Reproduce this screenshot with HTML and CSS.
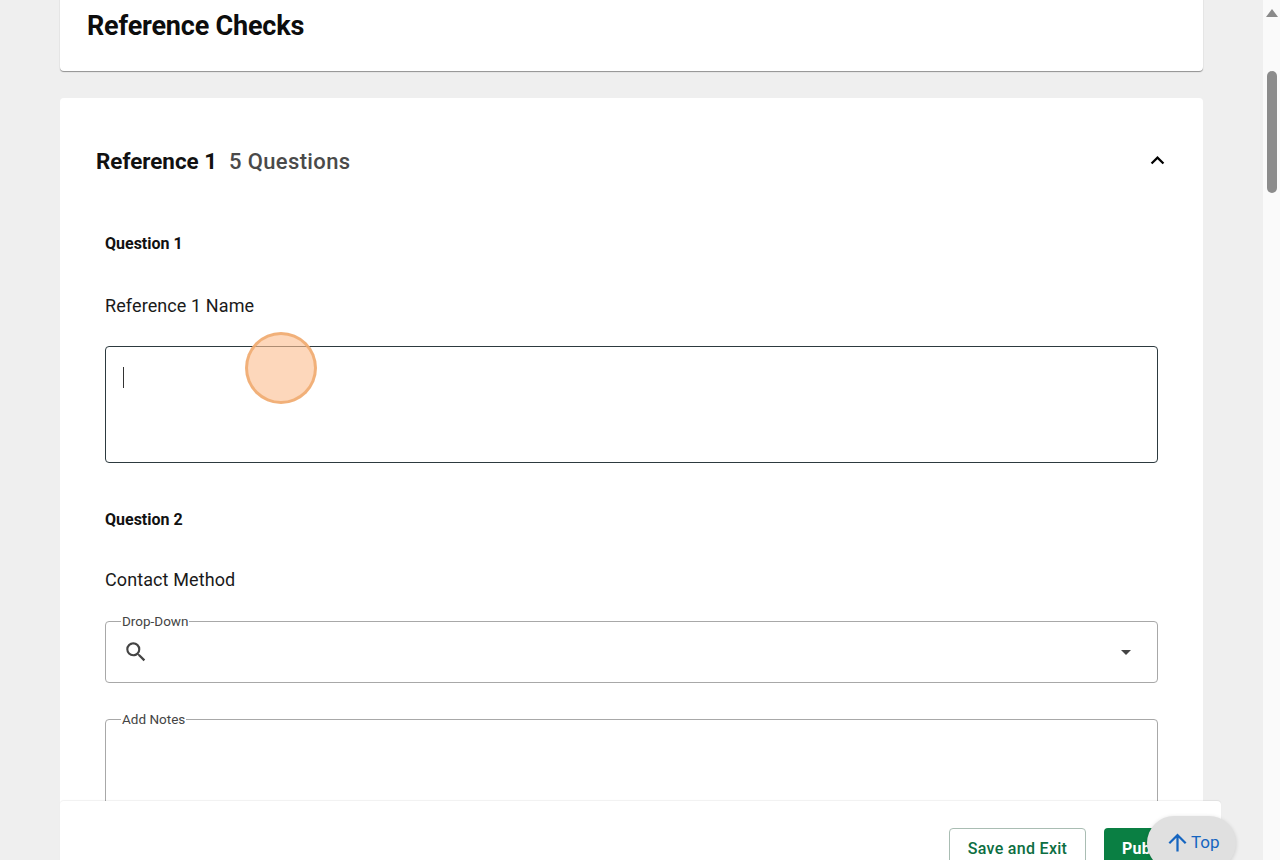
FILE: index.html
```html
<!DOCTYPE html>
<html lang="en">
<head>
<meta charset="utf-8">
<title>Reference Checks</title>
<link rel="stylesheet" href="styles.css">
</head>
<body>
<div class="viewport">
  <main class="content">
    <section class="card title-card"><h1>Reference Checks</h1></section>
    <section class="card ref-card">
      <header class="ref-head">
        <h2>Reference 1</h2>
        <span class="count">5 Questions</span>
        <svg class="chev" viewBox="0 0 24 24" width="27" height="27"><path d="M12 8l-6 6 1.41 1.41L12 10.83l4.59 4.58L18 14z"/></svg>
      </header>
      <div class="question">
        <h3>Question 1</h3>
        <p class="prompt">Reference 1 Name</p>
        <div class="textarea focused"><span class="caret"></span></div>
      </div>
      <div class="question q2">
        <h3>Question 2</h3>
        <p class="prompt">Contact Method</p>
        <fieldset class="field select">
          <legend>Drop-Down</legend>
          <svg class="search" viewBox="0 0 24 24" width="26" height="26"><path d="M15.5 14h-.79l-.28-.27A6.47 6.47 0 0 0 16 9.5 6.5 6.5 0 1 0 9.5 16c1.61 0 3.09-.59 4.23-1.57l.27.28v.79l5 4.99L20.49 19l-4.99-5zm-6 0C7.01 14 5 11.99 5 9.5S7.01 5 9.5 5 14 7.01 14 9.5 11.99 14 9.5 14z"/></svg>
          <svg class="arrow" viewBox="0 0 24 24" width="24" height="24"><path d="M7 10l5 5 5-5z"/></svg>
        </fieldset>
        <fieldset class="field notes">
          <legend>Add Notes</legend>
        </fieldset>
      </div>
    </section>
  </main>
  <div class="scrollbar">
    <span class="sb-up"></span>
    <span class="sb-thumb"></span>
  </div>
  <footer class="actions">
    <button class="btn outline">Save and Exit</button>
    <button class="btn solid">Publish</button>
  </footer>
  <button class="top-btn">
    <svg viewBox="0 0 24 24" width="27" height="27"><path d="M4 12l1.41 1.41L11 7.83V20h2V7.83l5.58 5.59L20 12l-8-8z"/></svg>
    <span>Top</span>
  </button>
  <div class="click-mark"></div>
</div>
</body>
</html>
```
FILE: styles.css
```css
* { box-sizing: border-box; }
html, body { margin: 0; height: 100%; overflow: hidden; }
body { font-family: Roboto, "Liberation Sans", sans-serif; color: #111; }
.viewport { position: relative; display: flex; width: 1280px; height: 860px; overflow: hidden; background: #efefef; }
.content { flex: 0 0 1263px; padding: 0 60px; overflow: hidden; }
.scrollbar { flex: 0 0 17px; background: #fafafa; display: flex; flex-direction: column; align-items: center; padding-top: 9px; }
.sb-up { width: 0; height: 0; border-left: 6px solid transparent; border-right: 6px solid transparent; border-bottom: 8px solid #8a8a8a; }
.sb-thumb { width: 10px; height: 122px; margin-top: 54px; border-radius: 5px; background: #8c8c8c; }

.card { background: #fff; border-radius: 4px; width: 1143px; }
.title-card { height: 81px; margin-top: -10px; padding: 18px 27px 0; box-shadow: 0 1px 1px rgba(0,0,0,.4); }
h1 { margin: 0; font-size: 27px; line-height: 36px; font-weight: 700; letter-spacing: -.2px; color: #0d0d0d; }
.ref-card { margin-top: 27px; height: 900px; padding: 45px 45px 0 36px; }
.ref-head { display: flex; align-items: center; height: 36px; }
h2 { margin: 0; font-size: 22.4px; font-weight: 700; color: #111; }
.count { margin-left: 12px; font-size: 22px; font-weight: 500; letter-spacing: .35px; color: #4a4a4a; }
.chev { margin-left: auto; margin-right: -13px; margin-top: -2px; fill: #000; }
.question { margin-left: 9px; }
h3 { margin: 0; font-size: 16px; line-height: 20px; font-weight: 700; color: #111; }
.ref-head + .question { padding-top: 55px; }
.prompt { margin: 40px 0 0; font-size: 18px; line-height: 24px; letter-spacing: .1px; color: #1a1a1a; }
.textarea { position: relative; height: 117px; margin-top: 28px; border: 1px solid #2d3a3f; border-radius: 4px; background: #fff; }
.caret { position: absolute; left: 17px; top: 20px; width: 1px; height: 21px; background: #333; }
.q2 { margin-top: 47px; }
.q2 .prompt { margin-top: 38px; }
.field { position: relative; margin: 0; border: 1px solid #a8a8a8; border-radius: 4px; min-width: 0; }
.field legend { padding: 0 1px; font-size: 13.5px; line-height: 16px; color: #444; }
.select { height: 70px; margin-top: 21px; display: flex; align-items: center; justify-content: space-between; padding: 0 19px 0 15px; }
.search { fill: #444; margin-left: 2px; margin-top: -8px; }
.arrow { fill: #444; margin-top: -7px; }
.notes { height: 200px; margin-top: 28px; padding: 0 15px; }

.actions { position: absolute; left: 60px; top: 801px; width: 1161px; height: 70px; display: flex; justify-content: flex-end; gap: 18px; padding: 27px 17px 0 0; background: #fff; border-radius: 4px 4px 0 0; box-shadow: 0 -1px 1px rgba(0,0,0,.06); }
.btn { height: 41px; border-radius: 4px; font-family: inherit; font-size: 16px; font-weight: 500; letter-spacing: .3px; }
.outline { width: 137px; background: #fff; border: 1px solid #a9bdb3; color: #0d6e42; }
.solid { width: 100px; border: 0; background: #0a7f43; color: #fff; font-weight: 700; text-align: left; padding-left: 18px; }
.top-btn { position: absolute; left: 1147px; top: 816px; width: 89px; height: 54px; display: flex; align-items: flex-start; gap: 0; padding: 13px 0 0 17px; border: 0; border-radius: 27px; background: #e0e0e0; box-shadow: 0 1px 4px rgba(0,0,0,.15); color: #1565c0; font-family: inherit; font-size: 17px; line-height: 24px; }
.top-btn svg { fill: #1565c0; flex: none; }
.top-btn span { margin-top: 1px; }
.click-mark { position: absolute; left: 245px; top: 332px; width: 72px; height: 72px; border-radius: 50%; background: rgba(251,190,145,.62); border: 3px solid rgba(240,170,110,.85); }
```
